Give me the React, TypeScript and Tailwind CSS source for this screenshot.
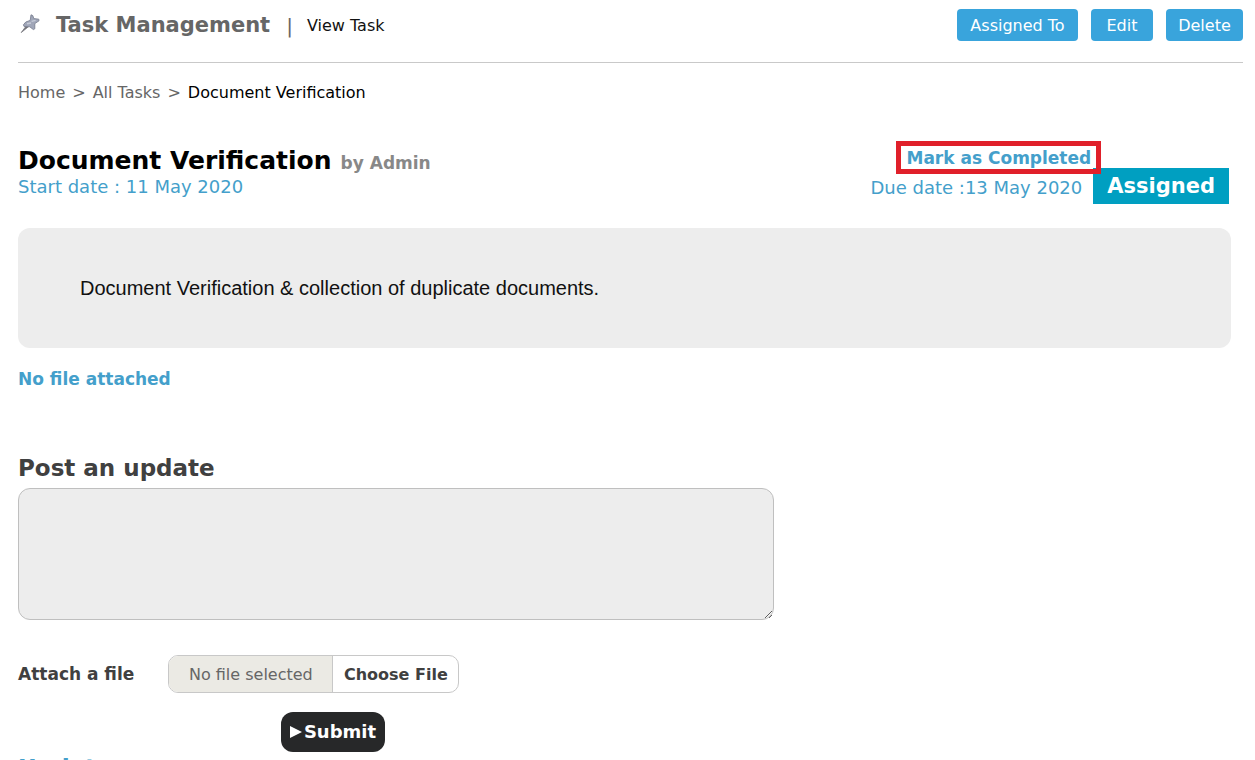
import React from "react";

const actions = [
  { label: "Assigned To", width: "w-[121px]" },
  { label: "Edit", width: "w-[62px]" },
  { label: "Delete", width: "w-[77px]" },
];

function PinIcon() {
  return (
    <svg viewBox="0 0 20 20" className="h-5 w-5" aria-hidden="true">
      <path d="M1.2 18.6 L6.6 11.4 L8.4 12.8 Z" fill="#6f6f75" stroke="#6f6f75" strokeWidth="0.7" />
      <path
        d="M11 0.8 L12.8 1.6 L13.8 4.6 L18.8 5.2 L19 6.8 L14.8 9.6 L14.8 14.8 L13.4 15.6 L9.8 12.8 L4 12.4 L3.4 10.8 L5.8 8 L10.2 6.4 Z"
        fill="#a0a6b8"
        stroke="#7d8293"
        strokeWidth="0.9"
        strokeLinejoin="round"
      />
      <path d="M11.6 7.4 L15.6 6.4 M7 9.8 L11 9" stroke="#c6cbd8" strokeWidth="1.4" />
    </svg>
  );
}

function Header() {
  return (
    <header className="flex items-start justify-between border-b border-[#c9c9c9] pt-[9px] pb-[21px]">
      <div className="flex h-8 items-center pt-0.5">
        <span className="ml-0.5 mb-1">
          <PinIcon />
        </span>
        <h1 className="ml-4 text-[21px] font-bold text-[#666]">Task Management</h1>
        <span className="ml-4 text-xl text-[#666]">|</span>
        <span className="ml-3.5 text-base text-[#111]">View Task</span>
      </div>
      <div className="flex gap-[13px]">
        {actions.map((a) => (
          <button
            key={a.label}
            type="button"
            className={`h-8 rounded-[4px] bg-[#39a4dc] pt-0.5 text-center text-base text-white ${a.width}`}
          >
            {a.label}
          </button>
        ))}
      </div>
    </header>
  );
}

export default function App() {
  return (
    <main className="min-h-screen bg-white pr-3 pl-[18px] font-['DejaVu_Sans',Verdana,sans-serif] text-base text-black">
      <Header />

      <nav aria-label="Breadcrumb" className="mt-[18px] flex h-6 items-center gap-[7px] text-[#666]">
        <a href="#home">Home</a>
        <span>&gt;</span>
        <a href="#tasks">All Tasks</a>
        <span>&gt;</span>
        <span className="text-black">Document Verification</span>
      </nav>

      <div className="pr-3">
        <section className="mt-9 flex items-start justify-between pr-0.5">
          <div className="pt-1">
            <div className="flex items-baseline gap-[9px] leading-8">
              <h2 className="text-[25px] font-bold">Document Verification</h2>
              <span className="text-[17px] font-bold text-[#888]">by Admin</span>
            </div>
            <p className="text-lg leading-4 text-[#449fcb]">Start date : 11 May 2020</p>
          </div>
          <div className="flex flex-col items-start">
            <a
              href="#complete"
              className="relative z-10 ml-[26px] -mb-1.5 h-[33px] border-[5px] border-[#e0202a] px-[5px] text-[17px] leading-6 font-bold text-[#449fcb]"
            >
              Mark as Completed
            </a>
            <div className="flex items-center gap-[11px]">
              <span className="pt-1 text-lg leading-6 text-[#449fcb]">Due date :13 May 2020</span>
              <span className="h-9 bg-[#009fc1] px-3.5 text-[21px] leading-9 font-bold text-white">
                Assigned
              </span>
            </div>
          </div>
        </section>

        <section className="mt-6 flex h-[120px] items-center rounded-xl bg-[#ededed] px-[62px] font-['Liberation_Sans',Arial,sans-serif] text-xl text-[#111]">
          <p>Document Verification &amp; collection of duplicate documents.</p>
        </section>

        <p className="mt-[19px] text-[17px] leading-6 font-bold text-[#449fcb]">No file attached</p>
      </div>

      <form onSubmit={(e) => e.preventDefault()} className="mt-[61px] text-[#404040]">
        <label htmlFor="update" className="block text-[23px] leading-8 font-bold">
          Post an update
        </label>
        <textarea
          id="update"
          className="mt-1 block h-[132px] w-[756px] max-w-full rounded-xl border border-[#bfbfbf] bg-[#ededed] p-3"
        />
        <div className="relative mt-[35px] flex items-center gap-[34px]">
          <label htmlFor="file" className="pt-0.5 text-[17px] font-bold">
            Attach a file
          </label>
          <label
            htmlFor="file"
            className="flex h-[38px] items-stretch overflow-hidden rounded-[10px] border border-[#c8c8c8] leading-9"
          >
            <span className="w-[164px] border-r border-[#c8c8c8] bg-[#ebeae4] pt-px text-center text-[#666]">
              No file selected
            </span>
            <span className="w-[125px] pt-px text-center font-bold">Choose File</span>
          </label>
          <input id="file" type="file" className="sr-only" />
        </div>
        <button
          type="submit"
          className="mt-[19px] ml-[263px] flex h-10 w-[104px] items-center justify-center gap-0.5 rounded-xl bg-[#272829] text-lg font-bold text-white"
        >
          <svg viewBox="0 0 12 12" className="h-3 w-3" aria-hidden="true">
            <path d="M0 0 L12 6 L0 12 Z" fill="currentColor" />
          </svg>
          Submit
        </button>
      </form>

      <h3 className="mt-0.5 text-[23px] leading-7 font-bold text-[#449fcb]">Updates</h3>
    </main>
  );
}
